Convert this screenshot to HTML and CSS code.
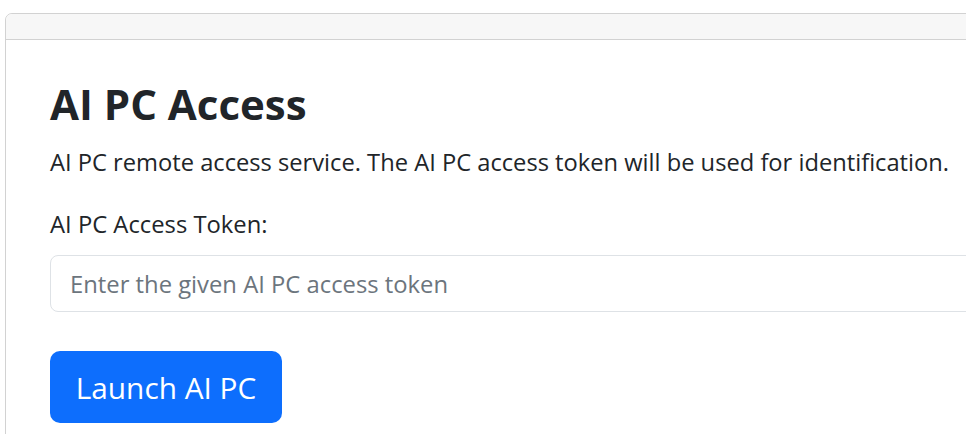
FILE: index.html
```html
<!DOCTYPE html>
<html lang="en">
<head>
<meta charset="utf-8">
<title>AI PC Access</title>
<link rel="stylesheet" href="styles.css">
</head>
<body>
<div class="card">
  <div class="card-header"></div>
  <div class="card-body">
    <h1 class="title">AI PC Access</h1>
    <p class="lead">AI PC remote access service. The AI PC access token will be used for identification.</p>
    <form class="form">
      <label class="label" for="token">AI PC Access Token:</label>
      <input class="input" id="token" type="text" placeholder="Enter the given AI PC access token">
      <button class="btn" type="button">Launch AI PC</button>
    </form>
  </div>
</div>
</body>
</html>
```
FILE: styles.css
```css
html, body {
  margin: 0;
  padding: 0;
  background: #ffffff;
  overflow: hidden;
}
body {
  padding: 13px 0 0 5px;
  font-family: "Open Sans", "Noto Sans", sans-serif;
  color: #212529;
}
.card {
  width: 1200px;
  border: 1px solid #d2d2d2;
  border-radius: 7px;
  background: #fff;
  min-height: 460px;
}
.card-header {
  height: 25px;
  background: #f7f7f7;
  border-bottom: 1px solid #d2d2d2;
  border-radius: 7px 7px 0 0;
}
.card-body {
  padding: 39px 44px 0 44px;
  display: flex;
  flex-direction: column;
}
.title {
  margin: 0 0 15px 0;
  font-size: 42px;
  line-height: 50px;
  font-weight: 700;
}
.lead {
  margin: 0 0 26px 0;
  font-size: 23.7px;
  line-height: 36px;
}
.form {
  display: flex;
  flex-direction: column;
  align-items: flex-start;
}
.label {
  font-size: 23.8px;
  line-height: 36px;
  margin-bottom: 13px;
}
.input {
  box-sizing: border-box;
  width: 1000px;
  height: 57px;
  border: 1px solid #dee2e6;
  border-radius: 8px;
  padding: 0 19px;
  font-family: inherit;
  font-size: 23.8px;
  color: #212529;
  background: #fff;
  margin: 0 0 39px 0;
}
.input::placeholder {
  color: #6c757d;
}
.btn {
  box-sizing: border-box;
  height: 72px;
  width: 232px;
  border: none;
  border-radius: 10px;
  background: #0d6efd;
  color: #fff;
  font-family: inherit;
  font-size: 29.8px;
  padding: 0;
  cursor: pointer;
}
```
